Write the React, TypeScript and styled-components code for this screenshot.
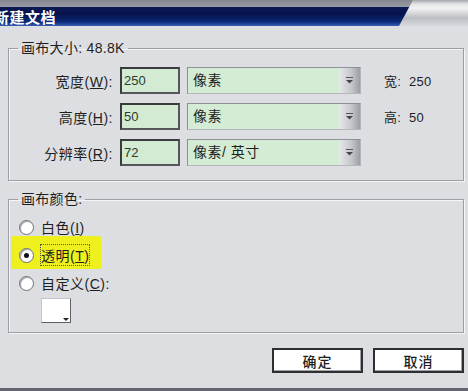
import React from 'react';
import styled, { createGlobalStyle } from 'styled-components';

const GlobalStyle = createGlobalStyle`
  html, body {
    margin: 0;
    padding: 0;
  }
  body {
    width: 468px;
    height: 391px;
    overflow: hidden;
    background: #dddee2;
    font-family: "Liberation Sans", "Noto Sans CJK SC", sans-serif;
    color: #1e1e1e;
  }
`;

const Dialog = styled.div`
  width: 468px;
  height: 391px;
  display: flex;
  flex-direction: column;
  background: #dddee2;
`;

const TitleBar = styled.div`
  height: 26px;
  display: flex;
  background: linear-gradient(
    #a4a6ac 0,
    #e2e3e6 4px,
    #f2f2f4 8px,
    #bdbec3 18px,
    #d8d9dd 26px
  );
`;

const TitleBand = styled.div`
  width: 413px;
  height: 26px;
  box-sizing: border-box;
  padding-top: 7px;
  background: linear-gradient(
    #858790 0,
    #9a9ca4 7px,
    #0b1a55 7px,
    #06124a 14px,
    #0d2b7a 22px,
    #3b5fb4 26px
  );
  clip-path: polygon(0 0, 100% 0, calc(100% - 14px) 100%, 0 100%);
`;

const TitleText = styled.div`
  margin-left: -6px;
  font-family: "Noto Sans CJK SC", sans-serif;
  font-weight: 700;
  font-size: 15px;
  line-height: 19px;
  color: #ffffff;
  letter-spacing: 0.5px;
`;

const Body = styled.div`
  flex: 1;
  display: flex;
  flex-direction: column;
  padding: 13px 4px 0 8px;
`;

const Group = styled.fieldset<{ $top?: number }>`
  margin: ${({ $top }) => $top ?? 0}px 0 0 0;
  padding: 0;
  border: 1px solid #9c9ea4;
  box-shadow: 1px 1px 0 #f6f6f8, inset 1px 1px 0 #f6f6f8;
  min-width: 0;
`;

const Legend = styled.legend`
  margin-left: 9px;
  padding: 0 3px;
  font-size: 14px;
  line-height: 18px;
  letter-spacing: 0.3px;
`;

const SizeGrid = styled.div`
  display: grid;
  grid-template-columns: 104px 60px 174px 1fr;
  grid-auto-rows: 27px;
  column-gap: 7px;
  row-gap: 9px;
  padding: 10px 0 14px 0;
  align-items: center;
`;

const FieldLabel = styled.div`
  text-align: right;
  font-size: 14px;
  letter-spacing: 0.5px;
  white-space: nowrap;
`;

const NumberBox = styled.div`
  height: 27px;
  box-sizing: border-box;
  border: 2px solid #3a3b3e;
  border-right-color: #55575b;
  border-bottom-color: #55575b;
  background: #d2ebd2;
  font-size: 13px;
  line-height: 23px;
  padding-left: 2px;
  color: #2c3a2c;
`;

const Select = styled.div`
  height: 27px;
  box-sizing: border-box;
  display: flex;
  border: 1px solid #b4b6bb;
  border-top-color: #8e9096;
  border-left-color: #8e9096;
  background: #d4ecd4;
`;

const SelectText = styled.div`
  flex: 1;
  font-size: 14px;
  line-height: 25px;
  padding-left: 5px;
  letter-spacing: 0.5px;
`;

const SelectButton = styled.div`
  width: 21px;
  display: flex;
  align-items: center;
  justify-content: center;
  background: linear-gradient(to right, #e6e7ea, #c9cace 55%, #9c9ea4);
`;

const Unit = styled.div`
  padding-left: 16px;
  font-size: 13px;
  white-space: pre;
  letter-spacing: 0.3px;
`;

const RadioList = styled.div`
  display: flex;
  flex-direction: column;
  padding: 5px 0 9px 10px;
`;

const RadioRow = styled.div<{ $marked?: boolean }>`
  position: relative;
  height: 28px;
  display: flex;
  align-items: center;
  gap: 7px;
  font-size: 14px;
  &::before {
    content: '';
    display: ${({ $marked }) => ($marked ? 'block' : 'none')};
    position: absolute;
    left: -8px;
    top: -5px;
    width: 90px;
    height: 33px;
    background: #eef01e;
    border-radius: 2px;
  }
`;

const RadioCircle = styled.span<{ $checked?: boolean }>`
  position: relative;
  width: 13px;
  height: 13px;
  border-radius: 50%;
  border: 1px solid #6f7178;
  background: radial-gradient(circle at 60% 60%, #ffffff 55%, #d8d9dd);
  box-shadow: inset 1px 1px 0 #a8aab0;
  &::after {
    content: '';
    display: ${({ $checked }) => ($checked ? 'block' : 'none')};
    position: absolute;
    left: 4px;
    top: 4px;
    width: 5px;
    height: 5px;
    border-radius: 50%;
    background: #111;
  }
`;

const RadioText = styled.span<{ $focus?: boolean }>`
  position: relative;
  letter-spacing: 0.5px;
  outline: ${({ $focus }) => ($focus ? '1px dotted #555' : 'none')};
`;

const Swatch = styled.div`
  position: relative;
  margin: 1px 0 0 22px;
  width: 30px;
  height: 25px;
  box-sizing: border-box;
  background: #ffffff;
  border: 1px solid #c4c5ca;
  border-right-color: #5f6167;
  border-bottom-color: #5f6167;
  &::after {
    content: '';
    position: absolute;
    right: 1px;
    bottom: 1px;
    border-left: 3px solid transparent;
    border-right: 3px solid transparent;
    border-top: 3px solid #222;
  }
`;

const ButtonRow = styled.div`
  display: flex;
  justify-content: flex-end;
  gap: 10px;
  margin-top: 15px;
`;

const Button = styled.div`
  width: 91px;
  height: 25px;
  box-sizing: border-box;
  border: 2px solid #2e2f33;
  background: #ffffff;
  box-shadow: inset -1px -1px 0 #a0a2a8;
  display: flex;
  align-items: center;
  justify-content: center;
  font-family: "Noto Sans CJK SC", sans-serif;
  font-size: 14px;
  font-weight: 500;
  letter-spacing: 1px;
`;

const BottomStrip = styled.div`
  height: 3px;
  background: #64666f;
`;

function DropArrow() {
  return (
    <svg width="9" height="9" viewBox="0 0 9 9">
      <rect x="1" y="1" width="7" height="1" fill="#55575c" />
      <path d="M1 4 L8 4 L4.5 7.5 Z" fill="#44464b" />
    </svg>
  );
}

const rows = [
  { label: '宽度', key: 'W', value: '250', unit: '像素', side: '宽:  250' },
  { label: '高度', key: 'H', value: '50', unit: '像素', side: '高:  50' },
  { label: '分辨率', key: 'R', value: '72', unit: '像素/ 英寸', side: '' },
];

export default function App() {
  return (
    <>
      <GlobalStyle />
      <Dialog>
        <TitleBar>
          <TitleBand>
            <TitleText>新建文档</TitleText>
          </TitleBand>
        </TitleBar>
        <Body>
          <Group>
            <Legend>画布大小: 48.8K</Legend>
            <SizeGrid>
              {rows.map((r) => (
                <React.Fragment key={r.key}>
                  <FieldLabel>
                    {r.label}(<u>{r.key}</u>):
                  </FieldLabel>
                  <NumberBox>{r.value}</NumberBox>
                  <Select>
                    <SelectText>{r.unit}</SelectText>
                    <SelectButton>
                      <DropArrow />
                    </SelectButton>
                  </Select>
                  <Unit>{r.side}</Unit>
                </React.Fragment>
              ))}
            </SizeGrid>
          </Group>
          <Group $top={9}>
            <Legend>画布颜色:</Legend>
            <RadioList>
              <RadioRow>
                <RadioCircle />
                <RadioText>
                  白色(<u>I</u>)
                </RadioText>
              </RadioRow>
              <RadioRow $marked>
                <RadioCircle $checked />
                <RadioText $focus>
                  透明(<u>T</u>)
                </RadioText>
              </RadioRow>
              <RadioRow>
                <RadioCircle />
                <RadioText>
                  自定义(<u>C</u>):
                </RadioText>
              </RadioRow>
              <Swatch />
            </RadioList>
          </Group>
          <ButtonRow>
            <Button>确定</Button>
            <Button>取消</Button>
          </ButtonRow>
        </Body>
        <BottomStrip />
      </Dialog>
    </>
  );
}
